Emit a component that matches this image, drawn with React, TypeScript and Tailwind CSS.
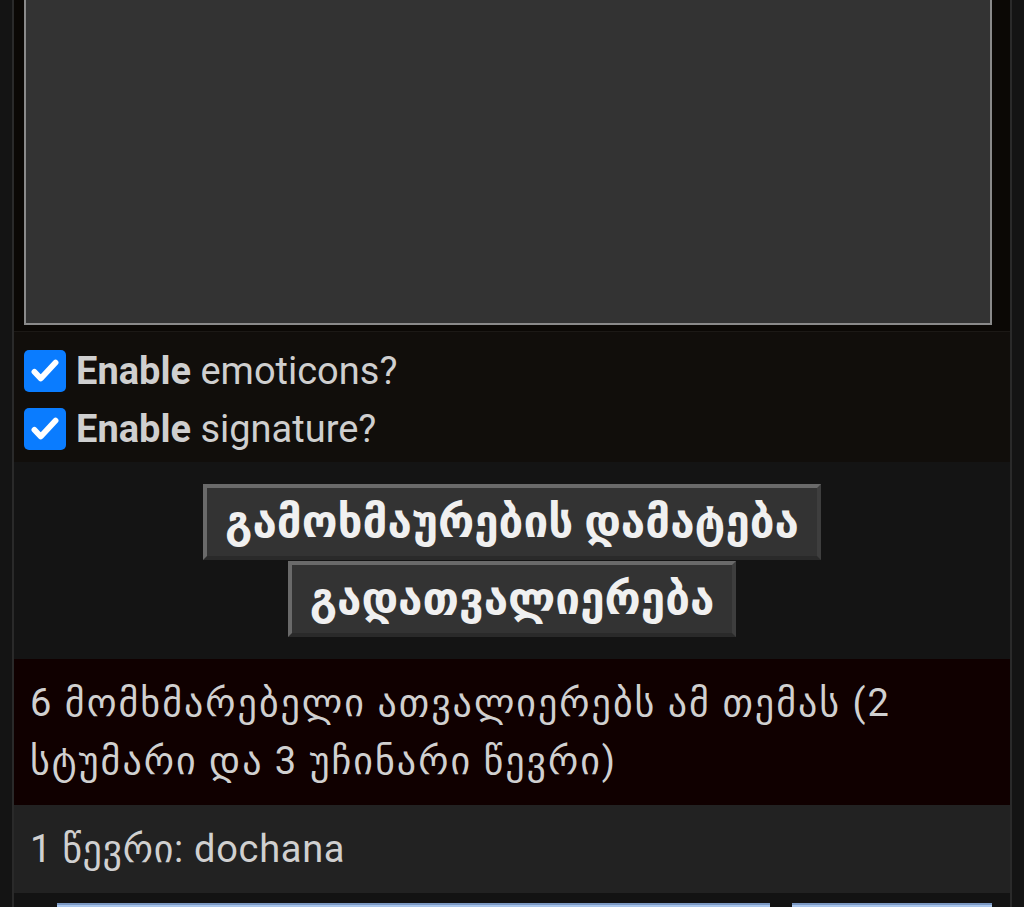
import React from "react";

const font = { fontFamily: 'Roboto, "DejaVu Sans", sans-serif' };

const options = ["emoticons?", "signature?"];

function Check() {
  return (
    <span className="flex h-[42px] w-[42px] shrink-0 items-center justify-center rounded-[5px] bg-[#0a7cff]">
      <svg width="34" height="34" viewBox="0 0 24 24" fill="none">
        <path d="M4.5 12.5l4.5 4.8L19.5 6" stroke="#fff" strokeWidth="4" strokeLinecap="round" strokeLinejoin="round" />
      </svg>
    </span>
  );
}

const App: React.FC = (): JSX.Element => {
  return (
    <div className="min-h-screen overflow-hidden bg-[#141414]" style={font}>
      <div className="ml-[12px] w-[1000px] border-x-2 border-[#2a2a2a]">
        {/* textarea */}
        <div className="bg-[#0b0805] pl-[10px] pr-[16px] pb-[6px]">
          <div className="h-[325px] w-[968px] border-2 border-t-0 border-[#8a8a8a] bg-[#333333]" />
        </div>

        {/* options */}
        <div className="border-t border-[#1c1916] bg-[#110e0b] px-[10px] pt-[10px] pb-[4px]">
          {options.map((o) => (
            <label key={o} className="flex h-[58px] items-center gap-[10px] text-[38px] text-[#cfcfcf]">
              <Check />
              <span className="leading-none">
                <b className="font-bold">Enable</b> {o}
              </span>
            </label>
          ))}
        </div>

        {/* buttons */}
        <div className="flex flex-col items-center gap-[1px] bg-[#141414] py-[22px]">
          <button className="h-[76px] border-4 border-t-[#6a6a6a] border-l-[#6a6a6a] border-r-[#3e3e3e] border-b-[#2a2a2a] bg-[#333333] px-[18px] text-[44px] font-bold leading-none text-[#f0f0f0]">
            გამოხმაურების დამატება
          </button>
          <button className="h-[76px] border-4 border-t-[#6a6a6a] border-l-[#6a6a6a] border-r-[#3e3e3e] border-b-[#2a2a2a] bg-[#333333] px-[18px] text-[44px] font-bold leading-none text-[#f0f0f0]">
            გადათვალიერება
          </button>
        </div>

        {/* viewers */}
        <div className="bg-[#100000] px-[16px] py-[15px] text-[38px] leading-[58px] tracking-[2px] text-[#d0d0d0]">
          6 მომხმარებელი ათვალიერებს ამ თემას (2 სტუმარი და 3 უჩინარი წევრი)
        </div>

        <div className="bg-[#222222] px-[16px] py-[15px] text-[38px] leading-[58px] tracking-[0.7px] text-[#d0d0d0]">
          1 წევრი: dochana
        </div>

        <div className="flex gap-[22px] bg-[#131313] pl-[43px] pt-[10px]">
          <div className="h-[20px] w-[713px] border-t-2 border-[#7b98c2] bg-[#a8c4ea]" />
          <div className="h-[20px] w-[200px] border-t-2 border-[#7b98c2] bg-[#a8c4ea]" />
        </div>
      </div>
    </div>
  );
};

export default App;
